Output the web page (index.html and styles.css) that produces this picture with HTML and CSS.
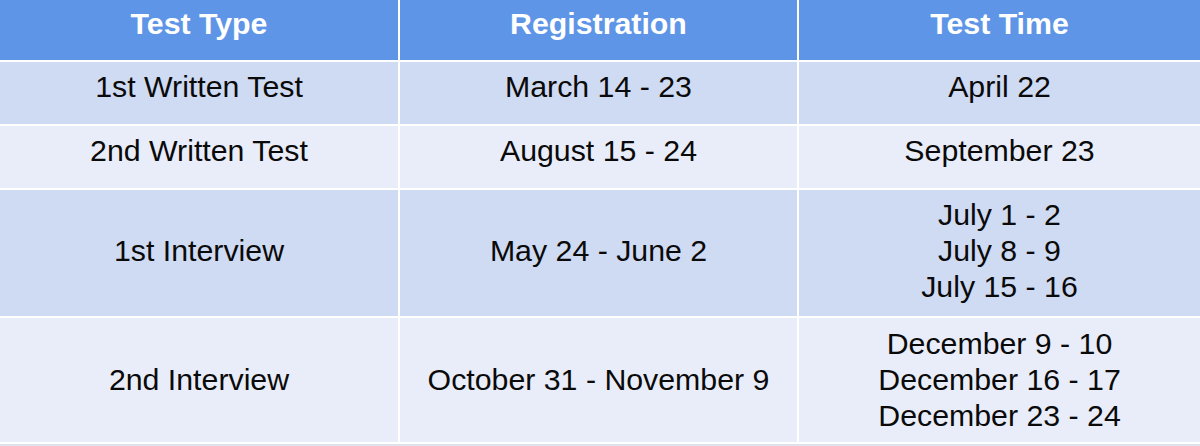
FILE: index.html
```html
<!DOCTYPE html>
<html lang="en">
<head>
<meta charset="utf-8">
<title>Test Schedule</title>
<link rel="stylesheet" href="styles.css">
</head>
<body>
<div class="schedule">
  <div class="cell head">Test Type</div>
  <div class="cell head">Registration</div>
  <div class="cell head">Test Time</div>

  <div class="cell odd">1st Written Test</div>
  <div class="cell odd">March 14 - 23</div>
  <div class="cell odd">April 22</div>

  <div class="cell even">2nd Written Test</div>
  <div class="cell even">August 15 - 24</div>
  <div class="cell even">September 23</div>

  <div class="cell odd mid">1st Interview</div>
  <div class="cell odd mid">May 24 - June 2</div>
  <div class="cell odd mid"><span>July 1 - 2</span><span>July 8 - 9</span><span>July 15 - 16</span></div>

  <div class="cell even tall">2nd Interview</div>
  <div class="cell even tall">October 31 - November 9</div>
  <div class="cell even tall"><span>December 9 - 10</span><span>December 16 - 17</span><span>December 23 - 24</span></div>
</div>
</body>
</html>
```

FILE: styles.css
```css
html, body {
  margin: 0;
  padding: 0;
}
body {
  background: #dde2ec;
  width: 1200px;
  height: 446px;
  overflow: hidden;
  font-family: "Liberation Sans", Arial, sans-serif;
}
.schedule {
  display: grid;
  grid-template-columns: 398px 397px 1fr;
  grid-template-rows: 60px 62px 62px 126px 124px;
  gap: 2px;
  padding-bottom: 2px;
  background: #ffffff;
}
.cell {
  display: flex;
  flex-direction: column;
  align-items: center;
  justify-content: center;
  padding-bottom: 12px;
  font-size: 30.3px;
  line-height: 36px;
  color: #0a0a0a;
  text-align: center;
  white-space: nowrap;
}
.head {
  background: #5e95e6;
  color: #ffffff;
  font-weight: bold;
  padding-bottom: 12px;
}
.odd {
  background: #cfdaf3;
}
.even {
  background: #e9edf9;
}
.mid {
  padding-bottom: 5px;
}
.tall {
  padding-bottom: 0;
}
```
